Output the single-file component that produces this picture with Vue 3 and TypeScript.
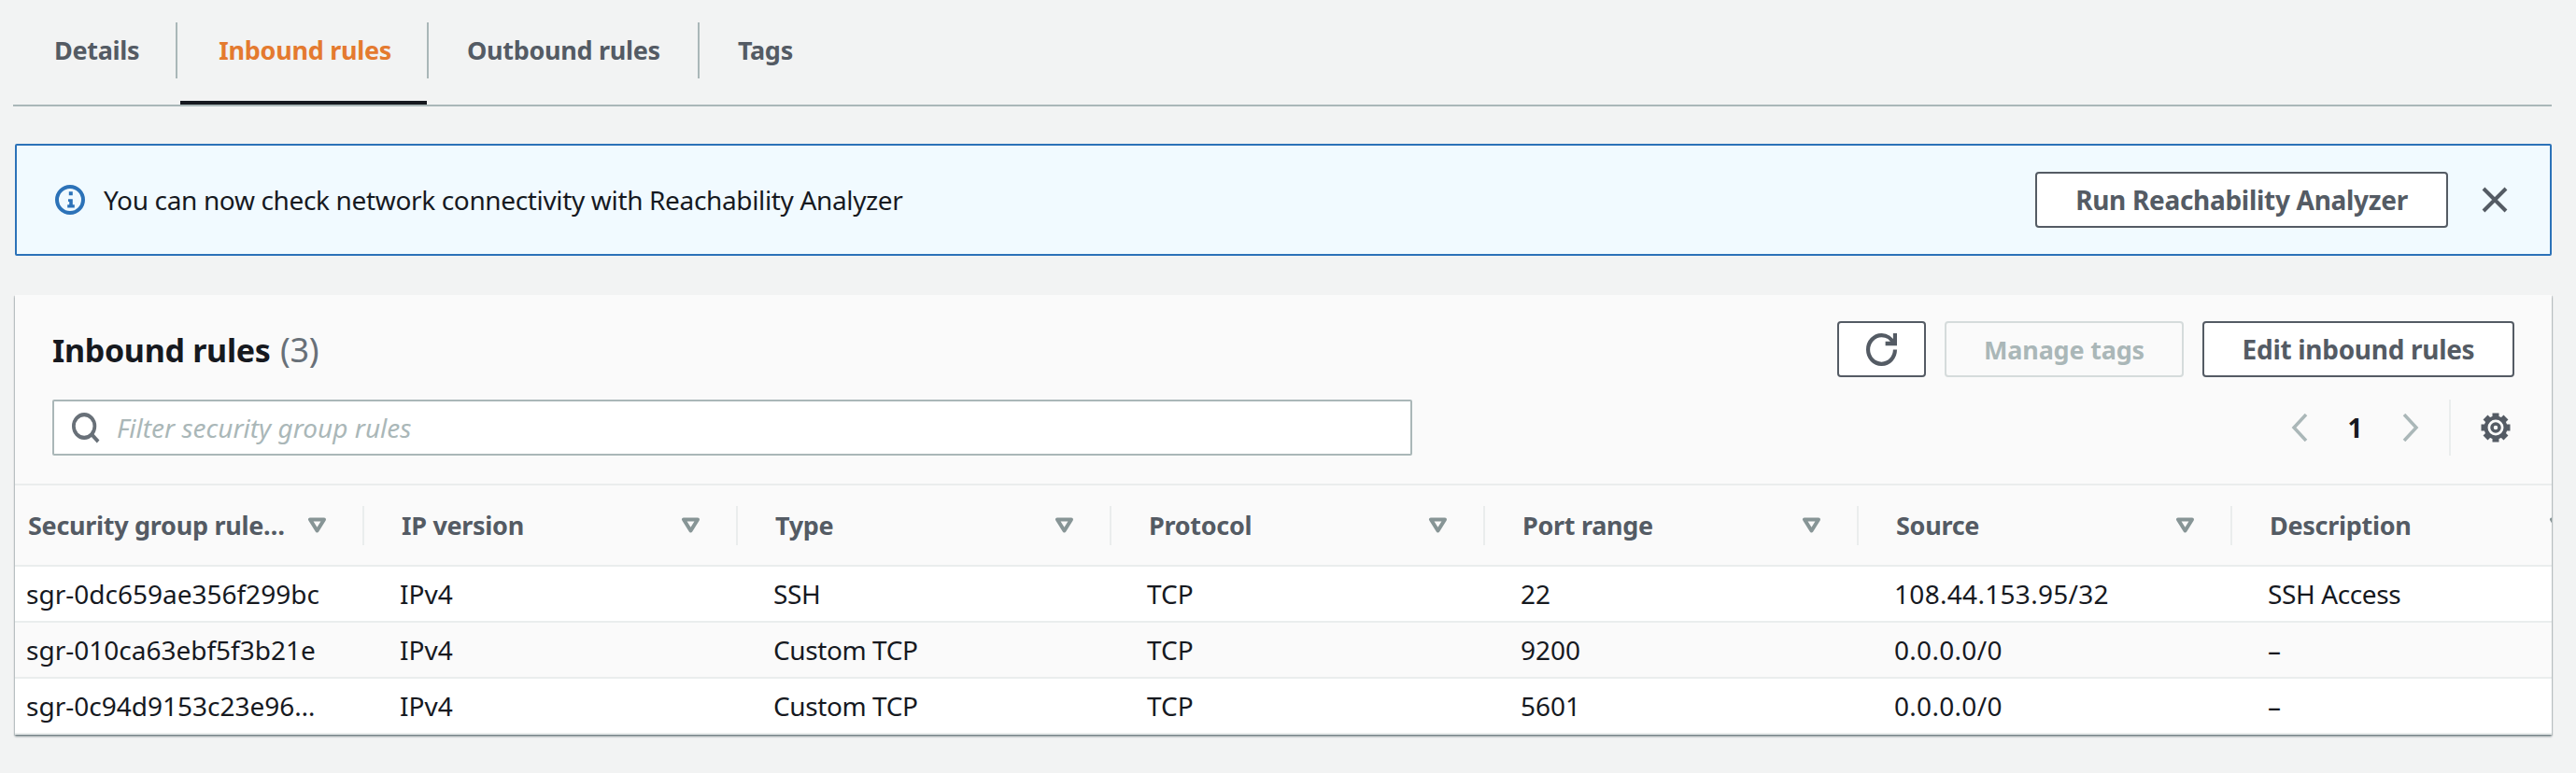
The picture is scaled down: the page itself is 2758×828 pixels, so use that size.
<template>
  <div class="page">
    <nav class="tabs">
      <a v-for="tab in tabs" :key="tab" class="tab" :class="{ active: tab === 'Inbound rules' }">
        <span class="tab-label">{{ tab }}</span>
      </a>
    </nav>

    <div class="flash">
      <svg class="info-icon" viewBox="0 0 16 16" width="32" height="32">
        <circle cx="8" cy="8" r="7" fill="none" stroke="currentColor" stroke-width="2" />
        <path d="M7.4 3.6h2v2h-2zM7 7.6h2.4v3h1v1.6H6.6v-1.6h1V9H7z" fill="currentColor" />
      </svg>
      <span class="flash-text">You can now check network connectivity with Reachability Analyzer</span>
      <button class="btn run-btn">Run Reachability Analyzer</button>
      <svg class="close-icon" viewBox="0 0 16 16" width="32" height="32">
        <path d="M2 2l12 12M14 2L2 14" fill="none" stroke="currentColor" stroke-width="2" />
      </svg>
    </div>

    <section class="panel">
      <header class="panel-head">
        <div class="head-left">
          <h2 class="title">Inbound rules <span class="count">(3)</span></h2>
          <div class="filter">
            <svg viewBox="0 0 16 16" width="30" height="33" preserveAspectRatio="none">
              <circle cx="7" cy="7" r="6" fill="none" stroke="currentColor" stroke-width="2" />
              <path d="M11 11l4 4" fill="none" stroke="currentColor" stroke-width="2" />
            </svg>
            <span class="placeholder">Filter security group rules</span>
          </div>
        </div>
        <div class="head-right">
          <div class="actions">
            <button class="btn icon-btn">
              <svg viewBox="0 0 16 16" width="33" height="35" preserveAspectRatio="none">
                <path d="M10 5h5V0" fill="none" stroke="currentColor" stroke-width="2" />
                <path d="M15 8a6.957 6.957 0 01-7 7 6.957 6.957 0 01-7-7 6.957 6.957 0 017-7 6.87 6.87 0 016.3 4" fill="none" stroke="currentColor" stroke-width="2" />
              </svg>
            </button>
            <button class="btn disabled">Manage tags</button>
            <button class="btn edit-btn">Edit inbound rules</button>
          </div>
          <div class="pager">
            <svg class="chev" viewBox="0 0 18 30" width="18" height="30">
              <path d="M16 1L3 15l13 14" fill="none" stroke="currentColor" stroke-width="3.5" />
            </svg>
            <span class="page-num">1</span>
            <svg class="chev" viewBox="0 0 18 30" width="18" height="30">
              <path d="M2 1l13 14L2 29" fill="none" stroke="currentColor" stroke-width="3.5" />
            </svg>
            <span class="pager-sep"></span>
            <svg class="gear" viewBox="0 0 32 32" width="32" height="32">
              <circle cx="16" cy="16" r="10.5" fill="none" stroke="currentColor" stroke-width="4" />
              <circle cx="16" cy="16" r="4" fill="none" stroke="currentColor" stroke-width="3.5" />
              <rect
                v-for="angle in gearTeeth"
                :key="angle"
                x="12.5"
                y="0.5"
                width="7"
                height="6"
                fill="currentColor"
                :transform="`rotate(${angle} 16 16)`"
              />
            </svg>
          </div>
        </div>
      </header>

      <div class="table-wrap">
        <table class="rules">
          <thead>
            <tr>
              <th v-for="col in columns" :key="col">
                <div class="th-inner">
                  <span>{{ col }}</span>
                  <svg class="sort" viewBox="0 0 21 17" width="21" height="17">
                    <path d="M3 2.5h15L10.5 14.5z" fill="none" stroke="currentColor" stroke-width="4" stroke-linejoin="round" />
                  </svg>
                </div>
              </th>
            </tr>
          </thead>
          <tbody>
            <tr v-for="row in rows" :key="row.id">
              <td>{{ row.id }}</td>
              <td>{{ row.ip }}</td>
              <td class="words">{{ row.type }}</td>
              <td>{{ row.protocol }}</td>
              <td>{{ row.port }}</td>
              <td class="address">{{ row.source }}</td>
              <td class="words">{{ row.description }}</td>
            </tr>
          </tbody>
        </table>
      </div>
    </section>
  </div>
</template>

<script setup lang="ts">
interface Rule {
  id: string
  ip: string
  type: string
  protocol: string
  port: string
  source: string
  description: string
}

const tabs: string[] = ['Details', 'Inbound rules', 'Outbound rules', 'Tags']

const gearTeeth: number[] = [0, 45, 90, 135, 180, 225, 270, 315]

const columns: string[] = [
  'Security group rule…',
  'IP version',
  'Type',
  'Protocol',
  'Port range',
  'Source',
  'Description',
]

const rows: Rule[] = [
  { id: 'sgr-0dc659ae356f299bc', ip: 'IPv4', type: 'SSH', protocol: 'TCP', port: '22', source: '108.44.153.95/32', description: 'SSH Access' },
  { id: 'sgr-010ca63ebf5f3b21e', ip: 'IPv4', type: 'Custom TCP', protocol: 'TCP', port: '9200', source: '0.0.0.0/0', description: '–' },
  { id: 'sgr-0c94d9153c23e96…', ip: 'IPv4', type: 'Custom TCP', protocol: 'TCP', port: '5601', source: '0.0.0.0/0', description: '–' },
]
</script>

<style>
html,
body {
  margin: 0;
  background: #f2f3f3;
}
</style>

<style scoped>
.page {
  box-sizing: border-box;
  height: 828px;
  padding: 24px 26px 0 14px;
  font-family: "Noto Sans", sans-serif;
  font-size: 28px;
  color: #16191f;
  background: #f2f3f3;
  overflow: hidden;
}

.tabs {
  box-sizing: border-box;
  display: flex;
  height: 90px;
  border-bottom: 2px solid #aab7b8;
}

.tab {
  box-sizing: border-box;
  height: 88px;
  padding: 0 40px 0 41px;
  position: relative;
  font-size: 27px;
  font-weight: 700;
  letter-spacing: -0.3px;
  color: #545b64;
  line-height: 60px;
}

.tab:first-child {
  padding: 0 41px 0 44px;
}

.tab:nth-child(3) {
  padding: 0 42px 0 43px;
}

.tab:not(:last-child) .tab-label::after {
  content: "";
  position: absolute;
  right: 0;
  top: 0;
  width: 2px;
  height: 60px;
  background: #aab7b8;
}

.tab.active {
  padding-right: 38px;
  color: #e47a2f;
  border-bottom: 4px solid #16191f;
  margin-left: 3px;
}

.tab.active .tab-label::after {
  right: -2px;
}

.flash {
  box-sizing: border-box;
  display: flex;
  align-items: center;
  height: 120px;
  margin: 40px 0 42px 2px;
  padding: 0 43px 0 41px;
  background: #f1faff;
  border: 2px solid #2c72b8;
  border-radius: 2px;
}

.info-icon {
  color: #2c72b8;
  flex: none;
}

.flash-text {
  flex: 1;
  margin-left: 20px;
  letter-spacing: -0.35px;
}

.btn {
  box-sizing: border-box;
  height: 60px;
  padding: 0 40px;
  background: #fff;
  border: 2px solid #545b64;
  border-radius: 4px;
  color: #545b64;
  font: 700 28px "Noto Sans", sans-serif;
  letter-spacing: -0.3px;
}

.run-btn {
  width: 442px;
  padding: 0;
}

.close-icon {
  color: #545b64;
  margin-left: 34px;
}

.panel {
  margin-left: 2px;
  background: #fafafa;
  box-shadow: 0 2px 2px rgba(0, 28, 36, 0.4), 1px 1px 1px rgba(0, 28, 36, 0.12), -1px 1px 1px rgba(0, 28, 36, 0.12);
  overflow: hidden;
}

.panel-head {
  box-sizing: border-box;
  display: flex;
  justify-content: space-between;
  height: 204px;
  padding: 28px 40px 0 40px;
  border-bottom: 2px solid #eaeded;
}

.title {
  margin: 0;
  height: 84px;
  line-height: 62px;
  font-size: 34px;
  font-weight: 700;
  letter-spacing: -0.3px;
}

.count {
  margin-left: 2px;
  font-size: 36px;
  font-weight: 400;
  color: #687078;
}

.filter {
  box-sizing: border-box;
  display: flex;
  align-items: center;
  gap: 18px;
  width: 1456px;
  height: 60px;
  padding: 0 19px;
  background: #fff;
  border: 2px solid #aab7b8;
  border-radius: 2px;
  color: #687078;
}

.placeholder {
  font-style: italic;
  color: #aab7b8;
}

.head-right {
  display: flex;
  flex-direction: column;
  align-items: flex-end;
}

.actions {
  display: flex;
  gap: 20px;
  height: 84px;
}

.icon-btn {
  width: 95px;
  padding: 0;
  display: flex;
  align-items: center;
  justify-content: center;
}

.disabled {
  width: 256px;
  padding: 0;
  color: #aab7b8;
  background: transparent;
  border-color: #d5dbdb;
  font-size: 27px;
  letter-spacing: -0.2px;
}

.edit-btn {
  width: 334px;
  padding: 0;
}

.pager {
  display: flex;
  align-items: center;
  height: 60px;
  padding-right: 4px;
}

.chev {
  color: #aab7b8;
}

.page-num {
  width: 101px;
  text-align: center;
  font-weight: 700;
}

.pager-sep {
  width: 2px;
  height: 60px;
  margin: 0 32px;
  background: #eaeded;
}

.gear {
  color: #545b64;
}

.table-wrap {
  overflow: hidden;
}

.rules {
  table-layout: fixed;
  border-collapse: collapse;
  width: 2774px;
}

.rules th {
  box-sizing: border-box;
  width: 400px;
  height: 86px;
  padding: 0 40px;
  text-align: left;
  font-size: 27px;
  font-weight: 700;
  letter-spacing: -0.3px;
  color: #545b64;
  border-bottom: 2px solid #eaeded;
  position: relative;
}

.rules th:first-child {
  width: 374px;
  padding: 0 40px 0 14px;
}

.rules th:not(:last-child)::after {
  content: "";
  position: absolute;
  right: 0;
  top: 22px;
  width: 2px;
  height: 42px;
  background: #eaeded;
}

.th-inner {
  display: flex;
  align-items: center;
  justify-content: space-between;
  white-space: nowrap;
}

.sort {
  color: #879596;
  flex: none;
}

.rules td {
  box-sizing: border-box;
  height: 60px;
  padding: 0 40px 0 38px;
  white-space: nowrap;
  border-bottom: 2px solid #eaeded;
}

.rules td:first-child {
  padding-left: 12px;
}

.rules td.words {
  letter-spacing: -0.4px;
}

.rules td.address {
  letter-spacing: 0.3px;
}

.rules tbody tr {
  background: #fff;
}

.rules tbody tr:nth-child(2) {
  background: #fafafa;
}
</style>
